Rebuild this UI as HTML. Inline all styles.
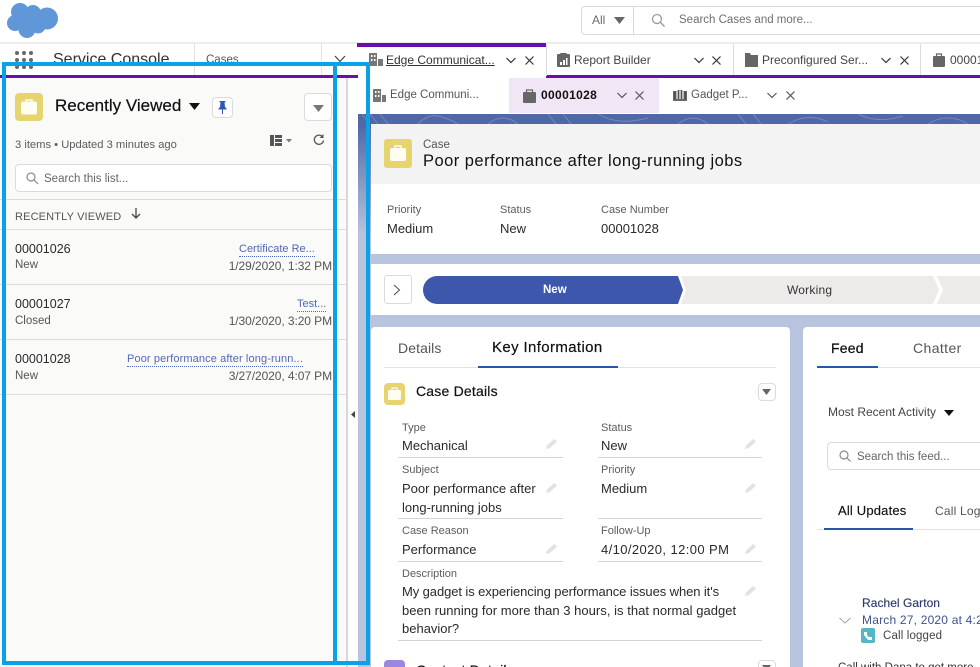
<!DOCTYPE html>
<html><head><meta charset="utf-8"><style>
html,body{margin:0;padding:0;background:#fff}
#p{position:relative;width:980px;height:667px;overflow:hidden;background:#fff;font-family:"Liberation Sans",sans-serif;color:#1a1a1a}
#p div,#p svg{position:absolute}
.t{white-space:nowrap;line-height:20px;font-size:12px;margin-top:1px}
.n{margin-top:0}
.l{font-size:11px;color:#5c5c5c}
.v{font-size:13px;color:#2a2a2a}
.h{background:#dddbda;height:1px}
.lk{font-size:11px;color:#5068b8;border-bottom:1px dotted #5068b8;line-height:13px}
.d{font-size:12px;color:#555;letter-spacing:-.08px}
</style></head><body><div id="p">

<!-- top header -->
<svg style="left:0;top:0" width="62" height="42" viewBox="0 0 62 42"><g fill="#5f97d8"><circle cx="20" cy="12" r="9"/><circle cx="33" cy="13" r="8"/><circle cx="47" cy="18.500" r="11"/><circle cx="15" cy="23" r="8"/><circle cx="27" cy="29.500" r="8.500"/><circle cx="38" cy="26" r="7.500"/><rect x="15" y="12" width="30" height="16"/></g></svg>

<div style="left:581px;top:6px;width:420px;height:27px;border:1px solid #dddbda;border-radius:4px"></div>
<div style="left:633px;top:7px;width:1px;height:27px;background:#dddbda"></div>
<div class="t" style="left:592px;top:9px;color:#6b6b6b">All</div>
<svg style="left:614px;top:17px" width="11" height="7"><path d="M0 0H11L5.500 7Z" fill="#666"/></svg>
<svg style="left:651px;top:13px" width="15" height="15" viewBox="0 0 15 15" fill="none" stroke="#9a9a9a" stroke-width="1.300"><circle cx="6" cy="6" r="4.500"/><path d="M9.500 9.500L13.500 13.500"/></svg>
<div class="t" style="left:679px;top:9px;color:#6f6f6f;font-size:11.500px">Search Cases and more...</div>
<div style="left:0;top:42px;width:980px;height:2px;background:#ececec"></div>

<!-- nav row -->
<svg style="left:14px;top:50px" width="20" height="20"><g fill="#686868"><circle cx="3" cy="3" r="2"/><circle cx="10" cy="3" r="2"/><circle cx="17" cy="3" r="2"/><circle cx="3" cy="10" r="2"/><circle cx="10" cy="10" r="2"/><circle cx="17" cy="10" r="2"/><circle cx="3" cy="17" r="2"/><circle cx="10" cy="17" r="2"/><circle cx="17" cy="17" r="2"/></g></svg>
<div class="t" style="left:53px;top:49px;font-size:16px;color:#333">Service Console</div>
<div style="left:194px;top:44px;width:1px;height:31px;background:#e3e3e3"></div>
<div style="left:321px;top:44px;width:1px;height:31px;background:#e3e3e3"></div>
<div class="t" style="left:206px;top:49px;font-size:11.500px;color:#555">Cases</div>
<svg style="left:334px;top:55px" width="12" height="8" fill="none" stroke="#444" stroke-width="1.200"><path d="M1 1L6 6.500L11 1"/></svg>
<div style="left:0;top:75px;width:358px;height:3px;background:#6a0dad"></div>

<!-- workspace tabs -->
<div style="left:357px;top:43px;width:189px;height:4px;background:#6a0dad"></div>
<div style="left:546px;top:75px;width:434px;height:3px;background:#6a0dad"></div>
<div style="left:546px;top:44px;width:1px;height:32px;background:#dcdcdc"></div>
<div style="left:733px;top:44px;width:1px;height:31px;background:#dcdcdc"></div>
<div style="left:920px;top:44px;width:1px;height:31px;background:#dcdcdc"></div>

<svg style="left:369px;top:53px" width="14" height="13" fill="#777"><rect x="0" y="0" width="8" height="13"/><rect x="9" y="6" width="5" height="7"/><path d="M2 2H3.500V4H2ZM5 2H6.500V4H5ZM2 6H3.500V8H2ZM5 6H6.500V8H5Z" fill="#fff"/></svg>
<div class="t n" style="left:386px;top:50px;text-decoration:underline;color:#333">Edge Communicat...</div>
<svg style="left:506px;top:57px" width="10" height="7" fill="none" stroke="#333" stroke-width="1.200"><path d="M.5 1L5 5.500L9.500 1"/></svg>
<svg style="left:525px;top:56px" width="9" height="9" stroke="#333" stroke-width="1.200"><path d="M.5.500L8.500 8.500M8.500.500L.5 8.500"/></svg>

<svg style="left:557px;top:53px" width="13" height="14" fill="#666"><rect x="0" y="1" width="13" height="13" rx="1"/><rect x="3" y="0" width="7" height="3" rx="1"/><path d="M3 9H5V12H3ZM6 7H8V12H6ZM9 5H10.500V12H9Z" fill="#fff"/></svg>
<div class="t n" style="left:574px;top:50px;color:#444">Report Builder</div>
<svg style="left:694px;top:57px" width="10" height="7" fill="none" stroke="#333" stroke-width="1.200"><path d="M.5 1L5 5.500L9.500 1"/></svg>
<svg style="left:712px;top:56px" width="9" height="9" stroke="#333" stroke-width="1.200"><path d="M.5.500L8.500 8.500M8.500.500L.5 8.500"/></svg>

<svg style="left:745px;top:53px" width="13" height="14" fill="#666"><path d="M0 0H5L6 2H13V14H0Z"/></svg>
<div class="t n" style="left:762px;top:50px;color:#444">Preconfigured Ser...</div>
<svg style="left:881px;top:57px" width="10" height="7" fill="none" stroke="#333" stroke-width="1.200"><path d="M.5 1L5 5.500L9.500 1"/></svg>
<svg style="left:900px;top:56px" width="9" height="9" stroke="#333" stroke-width="1.200"><path d="M.5.500L8.500 8.500M8.500.500L.5 8.500"/></svg>

<svg style="left:933px;top:53px" width="12" height="14" fill="#666"><rect y="3" width="12" height="11" rx="1"/><path d="M3.500 3V1H8.500V3" fill="none" stroke="#666" stroke-width="1.200"/></svg>
<div class="t n" style="left:950px;top:50px;color:#444">00001028</div>

<!-- left panel -->
<div style="left:0;top:78px;width:347px;height:589px;background:#fafaf9"></div>
<div style="left:346px;top:78px;width:2px;height:589px;background:#d8d8d8"></div>
<svg style="left:350px;top:411px" width="6" height="7"><path d="M5 0V7L1 3.500Z" fill="#444"/></svg>

<div style="left:15px;top:93px;width:28px;height:28px;background:#e6d46f;border-radius:4px"></div>
<svg style="left:20px;top:98px" width="18" height="18"><rect x="1" y="3.500" width="16" height="13" rx="2" fill="#fffdf2"/><path d="M6 4V2H12V4" fill="none" stroke="#fffdf2" stroke-width="1.500"/></svg>
<div class="t n" style="left:55px;top:96px;font-size:17px;color:#111;-webkit-text-stroke:.2px #111">Recently Viewed</div>
<svg style="left:189px;top:103px" width="11" height="7"><path d="M0 0H11L5.500 7Z" fill="#111"/></svg>
<div style="left:212px;top:97px;width:19px;height:19px;border:1px solid #dddbda;border-radius:4px;background:#fff"></div>
<svg style="left:218px;top:101px" width="9" height="13" fill="#2f55b8"><path d="M1.500 0H7.500V1.300H6.500L7 6L8.500 7.500V8.500H5V13H4V8.500H.5V7.500L2 6L2.500 1.300H1.500Z"/></svg>
<div style="left:304px;top:93px;width:26px;height:26px;border:1px solid #dddbda;border-radius:4px;background:#fff"></div>
<svg style="left:313px;top:105px" width="11" height="7"><path d="M0 0H11L5.500 7Z" fill="#777"/></svg>
<div class="t" style="left:15px;top:134px;font-size:11.200px;color:#5a5a5a">3 items • Updated 3 minutes ago</div>
<svg style="left:270px;top:135px" width="22" height="11"><path d="M0 0H4V11H0ZM5 0H12V3H5ZM5 4H12V7H5ZM5 8H12V11H5Z" fill="#555"/><path d="M16 4H22L19 7.500Z" fill="#777"/></svg>
<svg style="left:313px;top:134px" width="12" height="12" fill="none" stroke="#555" stroke-width="1.300"><path d="M9.800 3.200A4.600 4.600 0 1 0 10.500 6.500"/><path d="M10.500 0V4H6.500Z" fill="#555" stroke="none"/></svg>
<div style="left:15px;top:164px;width:315px;height:26px;border:1px solid #dddbda;border-radius:4px;background:#fff"></div>
<svg style="left:26px;top:172px" width="13" height="13" fill="none" stroke="#8a8a8a" stroke-width="1.200"><circle cx="5" cy="5" r="4"/><path d="M8 8L12 12"/></svg>
<div class="t" style="left:44px;top:168px;font-size:11.500px;color:#666">Search this list...</div>
<div class="h" style="left:0;top:199px;width:347px"></div>
<div class="t" style="left:15px;top:206px;font-size:11px;letter-spacing:.15px;color:#555">RECENTLY VIEWED</div>
<svg style="left:131px;top:208px" width="10" height="11" fill="none" stroke="#444" stroke-width="1.300"><path d="M5 0V10M1 6L5 10L9 6"/></svg>
<div class="h" style="left:0;top:229px;width:347px"></div>
<div class="h" style="left:0;top:284px;width:347px"></div>
<div class="h" style="left:0;top:339px;width:347px"></div>
<div class="h" style="left:0;top:394px;width:347px"></div>

<div class="t v n" style="left:15px;top:239px;font-size:12.500px">00001026</div>
<div class="t" style="left:15px;top:254px;font-size:11.500px;color:#555">New</div>
<div class="t lk" style="left:239px;top:242px">Certificate Re...</div>
<div class="t d" style="right:648px;top:255px">1/29/2020, 1:32 PM</div>

<div class="t v n" style="left:15px;top:294px;font-size:12.500px">00001027</div>
<div class="t" style="left:15px;top:310px;font-size:11.500px;color:#555">Closed</div>
<div class="t lk" style="left:297px;top:297px">Test...</div>
<div class="t d" style="right:648px;top:310px">1/30/2020, 3:20 PM</div>

<div class="t v n" style="left:15px;top:349px;font-size:12.500px">00001028</div>
<div class="t" style="left:15px;top:365px;font-size:11.500px;color:#555">New</div>
<div class="t lk" style="left:127px;top:352px;letter-spacing:.12px">Poor performance after long-runn...</div>
<div class="t d" style="right:648px;top:365px">3/27/2020, 4:07 PM</div>

<!-- right workspace bg -->
<div style="left:358px;top:78px;width:622px;height:36px;background:#fff"></div>
<div style="left:358px;top:114px;width:622px;height:553px;background:linear-gradient(#4f68a6 0,#4f68a6 10px,#7f92bf 60px,#b8c3dd 120px,#b8c3dd 100%)"></div>
<svg style="left:358px;top:114px" width="622" height="10" fill="none" stroke="#7488ba" stroke-width="1"><path d="M4 0L12 10M12 0L20 10M22 0L30 10M60 10Q70 0 80 2T100 10M130 10Q145 -2 160 10M190 0L198 10M205 0L213 10M240 0Q260 12 290 4M320 10Q335 -2 350 10M380 0L388 10M395 0L403 10M430 10Q450 -2 470 8M500 0Q520 10 545 2M570 10Q590 -2 610 10"/></svg>

<!-- sub tabs -->
<svg style="left:373px;top:89px" width="13" height="13" fill="#777"><rect width="8" height="13"/><rect x="9" y="6" width="4" height="7"/><path d="M2 2H3.500V4H2ZM5 2H6.500V4H5ZM2 6H3.500V8H2ZM5 6H6.500V8H5Z" fill="#fff"/></svg>
<div class="t" style="left:390px;top:84px;color:#555;font-size:11.500px">Edge Communi...</div>
<div style="left:509px;top:78px;width:150px;height:35px;background:#f1e6f6"></div>
<svg style="left:523px;top:89px" width="13" height="14" fill="#666"><rect y="3" width="13" height="11" rx="1"/><path d="M3.500 3V1H9.500V3" fill="none" stroke="#666" stroke-width="1.200"/></svg>
<div class="t" style="left:541px;top:84px;font-weight:bold;letter-spacing:.35px;color:#111">00001028</div>
<svg style="left:617px;top:92px" width="10" height="7" fill="none" stroke="#555" stroke-width="1.200"><path d="M.5 1L5 5.500L9.500 1"/></svg>
<svg style="left:635px;top:91px" width="9" height="9" stroke="#555" stroke-width="1.200"><path d="M.5.500L8.500 8.500M8.500.500L.5 8.500"/></svg>
<svg style="left:673px;top:89px" width="14" height="13" fill="none" stroke="#555" stroke-width="1.200"><path d="M1 2V11H13V2M2.500 2V10M5.500 1V10M8.500 1V10M11.500 2V10" stroke-width="1.800"/></svg>
<div class="t" style="left:691px;top:84px;color:#555;font-size:11.500px">Gadget P...</div>
<svg style="left:767px;top:92px" width="10" height="7" fill="none" stroke="#555" stroke-width="1.200"><path d="M.5 1L5 5.500L9.500 1"/></svg>
<svg style="left:786px;top:91px" width="9" height="9" stroke="#555" stroke-width="1.200"><path d="M.5.500L8.500 8.500M8.500.500L.5 8.500"/></svg>

<!-- highlights -->
<div style="left:371px;top:124px;width:609px;height:60px;background:#f3f3f3"></div>
<div style="left:371px;top:184px;width:609px;height:70px;background:#fff"></div>
<div style="left:384px;top:139px;width:28px;height:29px;background:#e6d46f;border-radius:3px"></div>
<svg style="left:389px;top:144px" width="18" height="19"><rect x="1" y="4" width="16" height="13" rx="2" fill="#fffdf2"/><path d="M6 4V2H12V4" fill="none" stroke="#fffdf2" stroke-width="1.500"/></svg>
<div class="t" style="left:423px;top:134px;font-size:11.500px;color:#555">Case</div>
<div class="t" style="left:423px;top:150px;font-size:16.500px;letter-spacing:.47px;color:#111">Poor performance after long-running jobs</div>
<div class="t l" style="left:387px;top:199px">Priority</div>
<div class="t v" style="left:387px;top:218px">Medium</div>
<div class="t l" style="left:500px;top:199px">Status</div>
<div class="t v" style="left:500px;top:218px">New</div>
<div class="t l" style="left:601px;top:199px">Case Number</div>
<div class="t v" style="left:601px;top:218px">00001028</div>

<!-- path -->
<div style="left:371px;top:264px;width:609px;height:51px;background:#fff"></div>
<div style="left:384px;top:275px;width:26px;height:27px;border:1px solid #dddbda;border-radius:3px;background:#fff"></div>
<svg style="left:393px;top:284px" width="8" height="12" fill="none" stroke="#555" stroke-width="1.100"><path d="M1 1L6.500 6L1 11"/></svg>
<svg style="left:423px;top:276px" width="557" height="28"><path d="M14 0H255L260 14L255 28H14A14 14 0 0 1 14 0Z" fill="#3c57ab"/><path d="M258 0H510L516 14L510 28H258L263 14Z" fill="#ecebea"/><path d="M514 0H557V28H514L520 14Z" fill="#ecebea"/></svg>
<div class="t" style="left:543px;top:279px;font-size:11.500px;font-weight:bold;color:#fff">New</div>
<div class="t" style="left:787px;top:279px;font-size:12px;letter-spacing:.2px;color:#333">Working</div>

<!-- cards -->
<div style="left:371px;top:327px;width:419px;height:340px;background:#fff;border-radius:4px 4px 0 0"></div>
<div style="left:803px;top:327px;width:177px;height:340px;background:#fff;border-radius:4px 0 0 0"></div>

<div class="t n" style="left:398px;top:338px;font-size:14px;letter-spacing:.1px;color:#555">Details</div>
<div class="t n" style="left:492px;top:338px;font-size:15px;letter-spacing:.37px;color:#111;-webkit-text-stroke:.2px #111">Key Information</div>
<div style="left:384px;top:367px;width:392px;height:1px;background:#e2e2e2"></div>
<div style="left:478px;top:366px;width:140px;height:2px;background:#2a56a8"></div>

<div style="left:384px;top:383px;width:21px;height:22px;background:#e6d46f;border-radius:4px"></div>
<svg style="left:387px;top:386px" width="15" height="16"><rect x="1" y="4" width="13" height="10" rx="1.500" fill="#fffdf2"/><path d="M5 4V2H10V4" fill="none" stroke="#fffdf2" stroke-width="1.200"/></svg>
<div class="t n" style="left:416px;top:381px;font-size:14px;letter-spacing:.2px;color:#111;-webkit-text-stroke:.2px #111">Case Details</div>
<div style="left:758px;top:383px;width:16px;height:16px;border:1px solid #dddbda;border-radius:4px;background:#fff"></div>
<svg style="left:762px;top:389px" width="9" height="6"><path d="M0 0H9L4.500 6Z" fill="#666"/></svg>

<div class="t l" style="left:402px;top:417px">Type</div>
<div class="t v" style="left:402px;top:435px">Mechanical</div>
<div class="h" style="left:398px;top:457px;width:165px;background:#d4d4d4"></div>
<div class="t l" style="left:601px;top:417px">Status</div>
<div class="t v" style="left:601px;top:435px">New</div>
<div class="h" style="left:598px;top:457px;width:164px;background:#d4d4d4"></div>

<div class="t l" style="left:402px;top:459px">Subject</div>
<div class="t v" style="left:402px;top:478px">Poor performance after</div>
<div class="t v" style="left:402px;top:497px">long-running jobs</div>
<div class="h" style="left:398px;top:518px;width:165px;background:#d4d4d4"></div>
<div class="t l" style="left:601px;top:459px">Priority</div>
<div class="t v" style="left:601px;top:478px">Medium</div>
<div class="h" style="left:598px;top:518px;width:164px;background:#d4d4d4"></div>

<div class="t l" style="left:402px;top:520px">Case Reason</div>
<div class="t v" style="left:402px;top:539px">Performance</div>
<div class="h" style="left:398px;top:561px;width:165px;background:#d4d4d4"></div>
<div class="t l" style="left:601px;top:520px">Follow-Up</div>
<div class="t v" style="left:601px;top:539px;letter-spacing:.4px">4/10/2020, 12:00 PM</div>
<div class="h" style="left:598px;top:561px;width:164px;background:#d4d4d4"></div>

<div class="t l" style="left:402px;top:563px">Description</div>
<div class="t v" style="left:402px;top:581px;letter-spacing:-.09px">My gadget is experiencing performance issues when it's</div>
<div class="t v" style="left:402px;top:600px;letter-spacing:.03px">been running for more than 3 hours, is that normal gadget</div>
<div class="t v" style="left:402px;top:618px">behavior?</div>
<div class="h" style="left:398px;top:640px;width:364px;background:#d4d4d4"></div>

<svg style="left:546px;top:438px" width="12" height="11"><path d="M0 11L1 7.500L8 1L11 3.500L4 10Z" fill="#e2e2e2"/></svg>
<svg style="left:745px;top:438px" width="12" height="11"><path d="M0 11L1 7.500L8 1L11 3.500L4 10Z" fill="#e2e2e2"/></svg>
<svg style="left:546px;top:482px" width="12" height="11"><path d="M0 11L1 7.500L8 1L11 3.500L4 10Z" fill="#e2e2e2"/></svg>
<svg style="left:745px;top:482px" width="12" height="11"><path d="M0 11L1 7.500L8 1L11 3.500L4 10Z" fill="#e2e2e2"/></svg>
<svg style="left:546px;top:543px" width="12" height="11"><path d="M0 11L1 7.500L8 1L11 3.500L4 10Z" fill="#e2e2e2"/></svg>
<svg style="left:745px;top:543px" width="12" height="11"><path d="M0 11L1 7.500L8 1L11 3.500L4 10Z" fill="#e2e2e2"/></svg>
<svg style="left:745px;top:585px" width="12" height="11"><path d="M0 11L1 7.500L8 1L11 3.500L4 10Z" fill="#e2e2e2"/></svg>

<div style="left:384px;top:660px;width:21px;height:22px;background:#9c86e0;border-radius:4px"></div>
<div class="t" style="left:416px;top:659px;font-size:14px;letter-spacing:.2px;color:#111;-webkit-text-stroke:.2px #111">Contact Details</div>
<div style="left:758px;top:660px;width:16px;height:16px;border:1px solid #dddbda;border-radius:4px;background:#fff"></div>
<svg style="left:762px;top:665px" width="9" height="6"><path d="M0 0H9L4.500 6Z" fill="#666"/></svg>

<!-- feed card -->
<div class="t n" style="left:831px;top:338px;font-size:14px;letter-spacing:.2px;color:#111;-webkit-text-stroke:.25px #111">Feed</div>
<div class="t n" style="left:913px;top:338px;font-size:14px;letter-spacing:.4px;color:#555">Chatter</div>
<div style="left:817px;top:367px;width:163px;height:1px;background:#e2e2e2"></div>
<div style="left:817px;top:366px;width:61px;height:2px;background:#2a56a8"></div>
<div class="t" style="left:828px;top:401px;font-size:12px;color:#444">Most Recent Activity</div>
<svg style="left:944px;top:410px" width="10" height="6"><path d="M0 0H10L5 6Z" fill="#111"/></svg>
<div style="left:827px;top:442px;width:170px;height:26px;border:1px solid #dddbda;border-radius:4px"></div>
<svg style="left:839px;top:450px" width="12" height="12" fill="none" stroke="#8a8a8a" stroke-width="1.200"><circle cx="5" cy="5" r="4"/><path d="M8 8L11.500 11.500"/></svg>
<div class="t" style="left:857px;top:446px;font-size:11.500px;color:#666">Search this feed...</div>
<div class="t" style="left:838px;top:500px;font-size:13px;letter-spacing:.18px;color:#111;-webkit-text-stroke:.15px #111">All Updates</div>
<div class="t" style="left:935px;top:500px;font-size:12px;letter-spacing:.2px;color:#555">Call Log</div>
<div style="left:817px;top:529px;width:163px;height:1px;background:#e2e2e2"></div>
<div style="left:824px;top:528px;width:89px;height:2px;background:#2a56a8"></div>
<div class="t" style="left:862px;top:592px;font-size:12px;letter-spacing:.05px;color:#2a3a6c;-webkit-text-stroke:.15px #2a3a6c">Rachel Garton</div>
<svg style="left:839px;top:617px" width="12" height="7" fill="none" stroke="#9aa3b5" stroke-width="1"><path d="M.5 1L6 6L11.500 1"/></svg>
<div class="t" style="left:862px;top:609px;font-size:12px;letter-spacing:.2px;color:#3d5290">March 27, 2020 at 4:27 PM</div>
<div style="left:861px;top:628px;width:14px;height:15px;background:#56b5c8;border-radius:2px"></div>
<svg style="left:864px;top:632px" width="8" height="8"><path d="M0 0H3V3L4.500 5H8V8H4L0 3Z" fill="#fff"/></svg>
<div class="t" style="left:883px;top:625px;font-size:11.500px;letter-spacing:.15px;color:#444">Call logged</div>
<div class="t" style="left:838px;top:657px;font-size:11.500px;color:#333">Call with Dana to get more</div>

<!-- blue rectangle overlay -->
<div style="left:2px;top:62px;width:360px;height:595px;border:4px solid #0aa2e6"></div>
<div style="left:333px;top:62px;width:4px;height:603px;background:#0aa2e6"></div>

</div></body></html>
